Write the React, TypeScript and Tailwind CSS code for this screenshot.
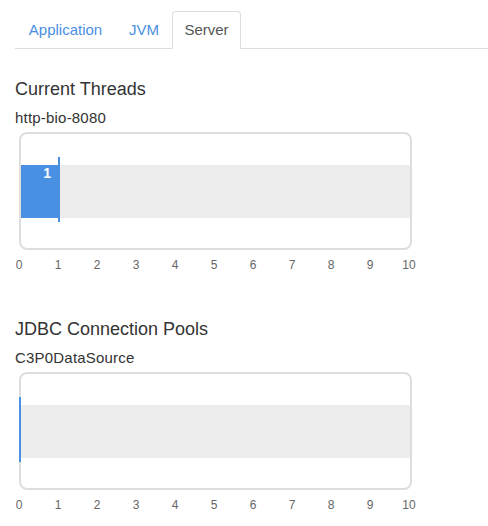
import React from 'react';

interface PoolChart {
  title: string;
  name: string;
  value: number;
}

const CHARTS: PoolChart[] = [
  { title: 'Current Threads', name: 'http-bio-8080', value: 1 },
  { title: 'JDBC Connection Pools', name: 'C3P0DataSource', value: 0 },
];

const MAX = 10;
const UNIT = 39; // px per tick

function Tabs() {
  return (
    <div className="flex h-[38px] border-b border-[#ddd] text-[15px] leading-[20px]">
      <div className="flex h-[38px] w-[101px] items-center justify-center text-[#4a90e2]">Application</div>
      <div className="ml-[2px] flex h-[38px] w-[52px] items-center justify-center text-[#4a90e2]">JVM</div>
      <div className="ml-[2px] flex h-[38px] w-[69px] items-center justify-center rounded-t-[4px] border border-[#ddd] border-b-white bg-white text-[#555]">
        Server
      </div>
    </div>
  );
}

function Chart({ title, name, value }: PoolChart) {
  const ticks = Array.from({ length: MAX + 1 }, (_, i) => i);
  return (
    <div>
      <h4 className="h-[24px] text-[18px] leading-[24px] text-[#333]">{title}</h4>
      <div className="mt-[7px] h-[20px] text-[15px] leading-[20px] tracking-[0.2px] text-[#333]">{name}</div>

      {/* bar box */}
      <div className="relative ml-[4px] mt-[4px] h-[118px] w-[393px] rounded-[8px] border-2 border-[#ddd]">
        <div className="mt-[31px] flex h-[53px] bg-[#ededed]">
          {value > 0 && (
            <div
              className="h-full bg-[#4a90e2] pr-[7px] text-right text-[14px] font-bold leading-[16px] text-white"
              style={{ width: value * UNIT - 2 }}
            >
              {value}
            </div>
          )}
        </div>
        {/* value marker */}
        <div
          className="absolute top-[23px] h-[65px] w-[2px] bg-[#4a90e2]"
          style={{ left: value * UNIT - 2 }}
        />
      </div>

      {/* axis */}
      <div className="ml-[4px] mt-[8px] flex w-[390px] justify-between text-[12px] leading-[14px] text-[#666]">
        {ticks.map((t) => (
          <div key={t} className="flex w-0 justify-center whitespace-nowrap">
            {t}
          </div>
        ))}
      </div>
    </div>
  );
}

export default function App() {
  return (
    <div className="h-[526px] w-[488px] overflow-hidden bg-white pl-[15px] pt-[11px] font-['Liberation_Sans',Arial,sans-serif]">
      <Tabs />
      <div className="mt-[28px]">
        <Chart {...CHARTS[0]} />
      </div>
      <div className="mt-[45px]">
        <Chart {...CHARTS[1]} />
      </div>
    </div>
  );
}
